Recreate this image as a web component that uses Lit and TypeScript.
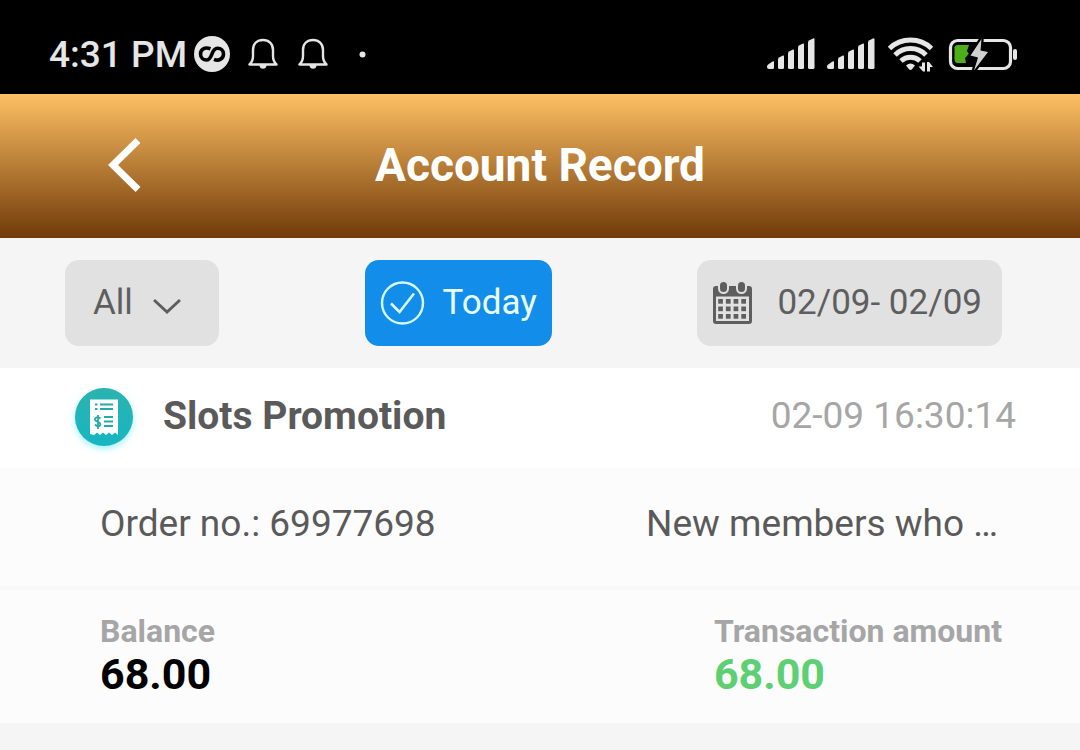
import { LitElement, html, css, svg } from "lit";
import { customElement, property } from "lit/decorators.js";

const signalIcon = html`
  <svg width="48" height="32" viewBox="0 0 48 32" fill="#e6e6e6" aria-hidden="true">
    <path d="M0 28.500 Q0 27 1.500 26.200 L5.500 23.500 Q7 22.700 7 24 V29.500 Q7 31 5.500 31 H2 Q0 31 0 29z" />
    <path d="M11 21.500 Q11 20 12.500 19.200 L16 17.600 Q17 17.200 17 18.500 V29.500 Q17 31 15.500 31 H12.500 Q11 31 11 29.500z" />
    <path d="M21 15.500 Q21 14 22.500 13.200 L26 11.600 Q27 11.200 27 12.500 V29.500 Q27 31 25.500 31 H22.500 Q21 31 21 29.500z" />
    <path d="M31 9.500 Q31 8 32.500 7.200 L36 5.600 Q37 5.200 37 6.500 V29.500 Q37 31 35.500 31 H32.500 Q31 31 31 29.500z" />
    <path d="M41 4.500 Q41 3 42.500 2.200 L46 .400 Q47.500 0 47.500 1.500 V29.500 Q47.500 31 46 31 H42.500 Q41 31 41 29.500z" />
  </svg>
`;

const bellIcon = html`
  <svg width="30" height="32" viewBox="0 0 30 32" fill="none" stroke="#e6e6e6" stroke-width="2.400" stroke-linejoin="round" aria-hidden="true">
    <path d="M1.500 26.500 H28.500 C25.500 23.800 25 21.500 25 18 V12 C25 5.500 20.800 2 15 2 S5 5.500 5 12 V18 C5 21.500 4.500 23.800 1.500 26.500z" />
    <path d="M11.500 27 a3.500 3.800 0 0 0 7 0z" fill="#e6e6e6" stroke="none" />
  </svg>
`;

@customElement("status-bar")
class StatusBar extends LitElement {
  @property() time = "";

  static styles = css`
    :host {
      display: flex;
      align-items: center;
      justify-content: space-between;
      height: 80px;
      padding: 14px 62px 0 49px;
      background: #000;
      color: #e6e6e6;
    }
    .group {
      display: flex;
      align-items: center;
    }
    .time {
      padding-top: 2px;
      font-size: 37px;
      line-height: 44px;
      font-weight: 500;
    }
    .left .app {
      margin: 0 18px 0 7px;
    }
    .left .bells {
      display: flex;
      gap: 20px;
      margin-right: 31px;
    }
    .right {
      gap: 12px;
    }
    svg {
      display: block;
    }
  `;

  render() {
    return html`
      <div class="group left">
        <span class="time">${this.time}</span>
        <svg class="app" width="36" height="36" viewBox="0 0 36 36" aria-hidden="true">
          <circle cx="18" cy="18" r="18" fill="#e6e6e6" />
          <path
            d="M16.500 12.800 C10 10.500 6.500 14 6.500 18 C6.500 22 9.500 24 12.500 24 C18.800 24 16.800 12.300 23.500 12.300 C27 12.300 29.500 14.500 29.500 18 C29.500 22.500 25 25.500 20 23.300"
            fill="none" stroke="#000" stroke-width="3.600"
          />
        </svg>
        <span class="bells">${bellIcon}${bellIcon}</span>
        <svg width="7" height="7" viewBox="0 0 7 7" aria-hidden="true">
          <circle cx="3.500" cy="3.500" r="3" fill="#e6e6e6" />
        </svg>
      </div>
      <div class="group right">
        ${signalIcon}${signalIcon}
        <svg width="48" height="36" viewBox="0 0 48 36" fill="none" stroke="#e6e6e6" stroke-width="5" aria-hidden="true">
          <path d="M2.500 12.500 A30.500 30.500 0 0 1 44.500 12.500" />
          <path d="M8 19 A22 22 0 0 1 39 19" />
          <path d="M14 25 A14 14 0 0 1 33 25" />
          <path d="M19 29.500 Q23.500 25.500 28 29.500 L25 33.300 Q23.500 34.800 22 33.300z" fill="#e6e6e6" stroke="none" />
          <path d="M35 26.500 H38 V35.500 H36 L31.500 30.500 H35z M40 35.500 V26 H42 L46 31 H43 V35.500z" fill="#e6e6e6" stroke="none" />
        </svg>
        <svg width="71" height="34" viewBox="0 0 71 34" aria-hidden="true">
          <rect x="3.500" y="3.500" width="60" height="28" rx="7" fill="none" stroke="#e6e6e6" stroke-width="3.200" />
          <path d="M11 8 H22 L20 14 L22 17 L18 21 L19 26 H11 Q7.500 26 7.500 22 V11 Q7.500 8 11 8z" fill="#4caf1a" />
          <path d="M34.500 2 L23.500 18.500 L31 20.500 L27 33.500 L41 15 L33.500 13.500z" fill="#d0d0d0" stroke="#000" stroke-width="4.500" paint-order="stroke" />
          <rect x="66" y="12" width="4" height="11" rx="2" fill="#e6e6e6" />
        </svg>
      </div>
    `;
  }
}

@customElement("record-card")
class RecordCard extends LitElement {
  @property() name = "";
  @property() time = "";
  @property() order = "";
  @property() note = "";
  @property() balance = "";
  @property() amount = "";

  static styles = css`
    :host {
      display: block;
      background: #fcfcfc;
      color: #5a5a5a;
    }
    .row {
      display: flex;
      justify-content: space-between;
      align-items: center;
      box-sizing: border-box;
    }
    .head {
      height: 100px;
      padding: 0 64px 4px 66px;
      background: #fff;
    }
    .title {
      display: flex;
      align-items: center;
      gap: 21px;
    }
    .icon {
      display: block;
      margin-top: 6px;
    }
    h2 {
      margin: 0;
      font-size: 39px;
      line-height: 44px;
      font-weight: 700;
    }
    time {
      font-size: 37px;
      line-height: 44px;
      color: #a6a6a6;
    }
    .detail {
      height: 122px;
      padding: 0 82px 6px 100px;
      border-bottom: 4px solid #f8f8f8;
      font-size: 37px;
      line-height: 44px;
    }
    .totals {
      margin: 0;
      padding: 22px 78px 24px 100px;
      font-weight: 700;
    }
    dt {
      font-size: 32px;
      line-height: 38px;
      color: #a6a6a6;
    }
    dd {
      margin: 0;
      font-size: 43px;
      line-height: 49px;
      color: #000;
    }
    .gain {
      color: #5cd073;
    }
  `;

  render() {
    return html`
      <div class="row head">
        <div class="title">
          <svg class="icon" width="76" height="76" viewBox="0 0 76 76" aria-hidden="true">
            <defs>
              <linearGradient id="disc" x1="0" y1="0" x2="0" y2="1">
                <stop offset="0" stop-color="#2bb3ae" />
                <stop offset="1" stop-color="#17b6c2" />
              </linearGradient>
              <filter id="glow" x="-30%" y="-30%" width="160%" height="160%">
                <feGaussianBlur stdDeviation="3" />
              </filter>
            </defs>
            <circle cx="38" cy="39" r="29" fill="#a4f2fa" filter="url(#glow)" />
            <circle cx="38" cy="36" r="29" fill="url(#disc)" />
            <path d="M24 18.500 H52 V54 L49 51.500 L46 54 L43 51.500 L40 54 L37 51.500 L34 54 L31 51.500 L28 54 L24 53z" fill="#fff" />
            <path d="M29 23.500 H31.500 M29 28 H31.500 M34 23.500 H47 M34 28 H47 M38 36 H47 M38 40.500 H47 M38 45 H47" stroke="#27a9aa" stroke-width="2" />
            <path d="M34.500 37.500 Q32 35 29.700 37 T32 41 Q35.500 42 34 44.500 Q32 46.500 29 43.500 M32 34 V48" fill="none" stroke="#27a9aa" stroke-width="1.800" />
          </svg>
          <h2>${this.name}</h2>
        </div>
        <time>${this.time}</time>
      </div>
      <div class="row detail">
        <span>Order no.: ${this.order}</span>
        <span>${this.note}</span>
      </div>
      <dl class="row totals">
        <div>
          <dt>Balance</dt>
          <dd>${this.balance}</dd>
        </div>
        <div>
          <dt>Transaction amount</dt>
          <dd class="gain">${this.amount}</dd>
        </div>
      </dl>
    `;
  }
}

@customElement("app-root")
class AppRoot extends LitElement {
  static styles = css`
    :host {
      display: block;
      min-height: 100vh;
      background: #f5f5f5;
      font-family: Roboto, "Liberation Sans", sans-serif;
    }
    header {
      display: grid;
      grid-template-columns: 1fr auto 1fr;
      align-items: center;
      height: 142px;
      padding: 0 100px 2px;
      background: linear-gradient(#fdc063, #713a09);
      color: #fff;
    }
    h1 {
      margin: 0;
      font-size: 46px;
      line-height: 54px;
      font-weight: 700;
    }
    button,
    select {
      border: 0;
      font: inherit;
      color: inherit;
      cursor: pointer;
    }
    svg {
      display: block;
    }
    .back {
      justify-self: start;
      padding: 0 8px;
      background: none;
    }
    .filters {
      display: flex;
      justify-content: space-between;
      padding: 22px 78px 22px 65px;
      font-size: 35px;
      line-height: 42px;
      color: #5e5e5e;
    }
    .chip {
      display: flex;
      align-items: center;
      height: 86px;
      border-radius: 14px;
      background: #e1e1e1;
    }
    .kind {
      display: grid;
      width: 154px;
    }
    .kind select {
      grid-area: 1 / 1;
      width: 100%;
      height: 100%;
      padding: 0 28px;
      appearance: none;
      background: none;
    }
    .kind svg {
      grid-area: 1 / 1;
      justify-self: end;
      margin: 6px 38px 0 0;
      pointer-events: none;
    }
    .today {
      gap: 18px;
      padding: 0 15px;
      background: #128de9;
      color: #e9fdff;
    }
    .range {
      gap: 24px;
      padding: 0 20px 0 15px;
    }
  `;

  render() {
    const cells = [0, 1, 2].flatMap((r) =>
      [0, 1, 2, 3].map((c) => svg`<rect x=${6.2 + c * 7.7} y=${18 + r * 7.5} width="4.700" height="4.700" />`)
    );
    return html`
      <status-bar time="4:31 PM"></status-bar>
      <header>
        <button class="back" aria-label="Back">
          <svg width="33" height="54" viewBox="0 0 33 54" fill="none" stroke="#fff" stroke-width="7">
            <path d="M30 2.500 L5 27 L30 51.500" />
          </svg>
        </button>
        <h1>Account Record</h1>
      </header>
      <main>
        <div class="filters">
          <div class="chip kind">
            <select aria-label="Record type">
              <option>All</option>
            </select>
            <svg width="28" height="17" viewBox="0 0 28 17" fill="none" stroke="#5e5e5e" stroke-width="3">
              <path d="M1 2 L14 14 L27 2" />
            </svg>
          </div>
          <button class="chip today" aria-pressed="true">
            <svg width="45" height="44" viewBox="0 0 45 44" fill="none" stroke="#d5fbff" stroke-width="2.400">
              <circle cx="22.500" cy="22" r="20.500" />
              <path d="M11 22.500 L19.500 31 L34 12.500" stroke-width="2.600" />
            </svg>
            Today
          </button>
          <button class="chip range">
            <svg width="41" height="44" viewBox="0 0 41 44" fill="#5e5e5e">
              <path
                fill-rule="evenodd"
                d="M4 5 H37 Q40 5 40 8 V40 Q40 43 37 43 H4 Q1 43 1 40 V8 Q1 5 4 5z M4 15.500 V40 H37 V15.500z"
              />
              <rect x="7" y="0" width="9" height="12" rx="4.500" stroke="#e1e1e1" stroke-width="2" />
              <rect x="25" y="0" width="9" height="12" rx="4.500" stroke="#e1e1e1" stroke-width="2" />
              ${cells}
            </svg>
            02/09- 02/09
          </button>
        </div>
        <record-card
          name="Slots Promotion"
          time="02-09 16:30:14"
          order="69977698"
          note="New members who …"
          balance="68.00"
          amount="68.00"
        ></record-card>
      </main>
    `;
  }
}
